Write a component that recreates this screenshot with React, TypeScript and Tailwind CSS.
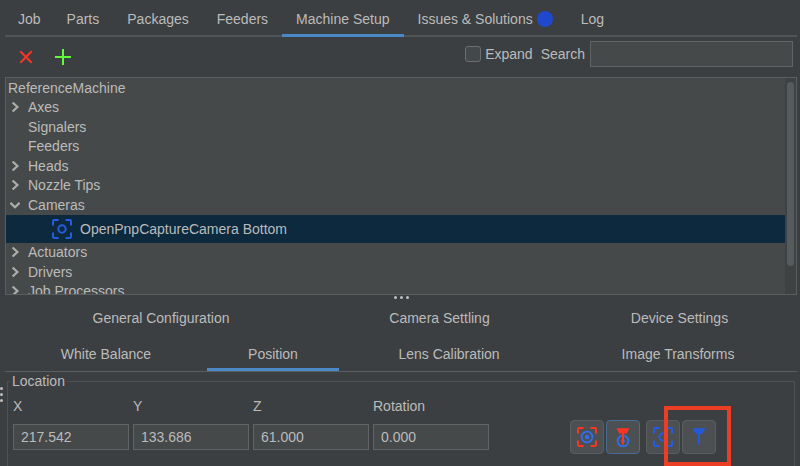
import type { ReactNode } from "react";
import clsx from "clsx";

type Branch = { name: string; state: "root" | "closed" | "open" | "leaf" | "camera" };

const tree: Branch[] = [
  { name: "ReferenceMachine", state: "root" },
  { name: "Axes", state: "closed" },
  { name: "Signalers", state: "leaf" },
  { name: "Feeders", state: "leaf" },
  { name: "Heads", state: "closed" },
  { name: "Nozzle Tips", state: "closed" },
  { name: "Cameras", state: "open" },
  { name: "OpenPnpCaptureCamera Bottom", state: "camera" },
  { name: "Actuators", state: "closed" },
  { name: "Drivers", state: "closed" },
  { name: "Job Processors", state: "closed" },
];

const mainTabs = ["Job", "Parts", "Packages", "Feeders", "Machine Setup", "Issues & Solutions", "Log"];

const fields = [
  { label: "X", value: "217.542" },
  { label: "Y", value: "133.686" },
  { label: "Z", value: "61.000" },
  { label: "Rotation", value: "0.000" },
];

function Brackets({ color }: { color: string }) {
  return (
    <path
      d="M1 6.5V2.2Q1 1 2.2 1H6.5M13.5 1H17.8Q19 1 19 2.2V6.5M19 13.5V17.8Q19 19 17.8 19H13.5M6.5 19H2.2Q1 19 1 17.8V13.5"
      fill="none"
      stroke={color}
      strokeWidth="2"
    />
  );
}

function CameraIcon() {
  return (
    <svg width="20" height="20" viewBox="0 0 20 20" aria-hidden="true">
      <Brackets color="#255ce2" />
      <circle cx="10" cy="10" r="3.7" fill="none" stroke="#255ce2" strokeWidth="2" />
    </svg>
  );
}

function CaptureCameraIcon() {
  return (
    <svg width="20" height="20" viewBox="0 0 20 20" aria-hidden="true">
      <Brackets color="#fb3424" />
      <circle cx="10" cy="10" r="5.4" fill="none" stroke="#2f6ff2" strokeWidth="1.7" />
      <circle cx="10" cy="10" r="2.2" fill="#2f6ff2" />
    </svg>
  );
}

function CaptureToolIcon() {
  return (
    <svg width="20" height="20" viewBox="0 0 20 20" aria-hidden="true">
      <circle cx="10" cy="14" r="5.4" fill="none" stroke="#2f6ff2" strokeWidth="1.7" />
      <circle cx="10" cy="14" r="2" fill="#2f6ff2" />
      <path d="M3.5 1.2H16.5L13.6 6.6H6.4Z" fill="#fb3424" />
      <path d="M10 6V17.5" stroke="#fb3424" strokeWidth="2" />
    </svg>
  );
}

function ToolIcon() {
  return (
    <svg width="20" height="20" viewBox="0 0 20 20" aria-hidden="true">
      <path d="M3.4 1.2H16.6L13.4 6.8H6.6Z" fill="#2459dc" />
      <path d="M10 6V17.4" stroke="#2459dc" strokeWidth="2" />
    </svg>
  );
}

function Chevron({ open }: { open: boolean }) {
  return (
    <svg width="10" height="10" viewBox="0 0 10 10" fill="none" stroke="#adadad" strokeWidth="2.2" aria-hidden="true">
      <path d={open ? "M0.4 2.8L5 7.2L9.6 2.8" : "M2.6 0.5L7.4 5L2.6 9.5"} />
    </svg>
  );
}

function Tab({ children, active, className }: { children: ReactNode; active?: boolean; className?: string }) {
  return (
    <button
      type="button"
      role="tab"
      aria-selected={!!active}
      className={clsx(
        "flex items-center justify-center gap-1 whitespace-nowrap border-b-3 pt-[3px]",
        active ? "border-[#4a88c7]" : "border-transparent",
        className,
      )}
    >
      {children}
    </button>
  );
}

function Dots({ vertical }: { vertical?: boolean }) {
  return (
    <span className={clsx("flex gap-[3px]", vertical && "flex-col")}>
      <i className="size-[3px] rounded-full bg-[#c0c0c0]" />
      <i className="size-[3px] rounded-full bg-[#c0c0c0]" />
      <i className="size-[3px] rounded-full bg-[#c0c0c0]" />
    </span>
  );
}

function IconButton({ label, active, children }: { label: string; active?: boolean; children: ReactNode }) {
  return (
    <button
      type="button"
      aria-label={label}
      className={clsx(
        "flex size-[34px] items-center justify-center rounded border bg-[#4c5052]",
        active ? "border-[#466d94]" : "border-[#5a5d5e]",
      )}
    >
      {children}
    </button>
  );
}

export default function App() {
  return (
    <div className="flex h-screen min-h-[466px] overflow-hidden bg-[#3c3f41] font-['Liberation_Sans',Arial,sans-serif] text-[14px] leading-[18px] text-[#bbbbbb]">
      <div className="flex w-[5px] shrink-0 flex-col pt-[387px]">
        <Dots vertical />
      </div>
      <main className="flex min-w-0 flex-1 flex-col pr-[3px]">
        <div role="tablist" className="flex h-[37px] shrink-0 bg-[linear-gradient(#515455,#515455)] bg-[length:100%_2px] bg-bottom bg-no-repeat">
          {mainTabs.map((name) => (
            <Tab key={name} active={name === "Machine Setup"} className="px-[14px] first:pl-[13px] first:pr-3">
              {name}
              {name === "Issues & Solutions" && <span className="size-4 rounded-full bg-[#1f48cd]" />}
            </Tab>
          ))}
        </div>

        <div className="flex h-10 shrink-0 items-center pl-[13px] pr-1">
          <button type="button" aria-label="Delete" className="flex size-4 items-center justify-center">
            <svg width="16" height="16" viewBox="0 0 16 16" stroke="#fb3424" strokeWidth="2">
              <path d="M2.3 2.3L13.7 13.7M13.7 2.3L2.3 13.7" />
            </svg>
          </button>
          <button type="button" aria-label="Add" className="ml-[21px] flex size-4 items-center justify-center">
            <svg width="16" height="16" viewBox="0 0 16 16" stroke="#62f83c" strokeWidth="2">
              <path d="M0 8H16M8 0V16" />
            </svg>
          </button>
          <div className="mb-[7px] ml-auto flex items-center">
            <label className="flex items-center gap-1">
              <input type="checkbox" className="size-4 appearance-none rounded-[3px] border border-[#6b6d6e] bg-[#43494a]" />
              Expand
            </label>
            <label htmlFor="search" className="ml-2">
              Search
            </label>
            <input id="search" type="text" className="ml-[5px] h-[26px] w-[203px] border border-[#616465] bg-[#45494a] px-2 outline-none" />
          </div>
        </div>

        <div className="flex h-[218px] shrink-0 overflow-hidden border border-[#5b5e5f] bg-[#464949]">
          <ul role="tree" className="grid h-[223px] flex-1 grid-rows-[repeat(7,1fr)_28px_repeat(3,1fr)]">
            {tree.map(({ name, state }) => (
              <li
                key={name}
                role="treeitem"
                aria-selected={state === "camera"}
                className={clsx(
                  "flex items-center",
                  state === "root" && "pl-[2px]",
                  state === "leaf" && "pl-[22px]",
                  (state === "closed" || state === "open") && "gap-2 pl-1",
                  state === "camera" && "gap-2 bg-[#0d293e] pl-[46px]",
                )}
              >
                {(state === "closed" || state === "open") && <Chevron open={state === "open"} />}
                {state === "camera" && <CameraIcon />}
                {name}
              </li>
            ))}
          </ul>
          <div className="w-[11px] bg-[#3e4243] px-[2px] pt-1">
            <div className="h-[184px] rounded-full bg-[#565b5e]" />
          </div>
        </div>

        <div className="flex h-[5px] shrink-0 items-center justify-center">
          <Dots />
        </div>

        <div role="tablist" className="shrink-0 border-b border-[#5b5e5f]">
          <div className="grid h-9 grid-cols-[312fr_245fr_235fr]">
            <Tab>General Configuration</Tab>
            <Tab>Camera Settling</Tab>
            <Tab>Device Settings</Tab>
          </div>
          <div className="grid h-[35px] grid-cols-[202fr_132fr_220fr_238fr]">
            <Tab>White Balance</Tab>
            <Tab active>Position</Tab>
            <Tab>Lens Calibration</Tab>
            <Tab>Image Transforms</Tab>
          </div>
        </div>

        <fieldset className="mx-[2px] min-w-0 flex-1 border border-b-0 border-[#4f5253] pl-[5px]">
          <legend className="-ml-[3px] px-[2px]">Location</legend>
          <div className="flex items-end gap-1 pt-[7px]">
            {fields.map(({ label, value }) => (
              <label key={label} className="grid gap-[5px]">
                {label}
                <span className="flex h-[34px] items-center">
                  <input
                    type="text"
                    defaultValue={value}
                    className="h-[26px] w-[116px] border border-[#616465] bg-[#45494a] px-[7px] outline-none"
                  />
                </span>
              </label>
            ))}
            <div className="ml-[77px] flex gap-[6px]">
              <div className="flex gap-[2px]">
                <IconButton label="Capture camera coordinates">
                  <CaptureCameraIcon />
                </IconButton>
                <IconButton label="Capture tool coordinates" active>
                  <CaptureToolIcon />
                </IconButton>
              </div>
              <div className="flex gap-[2px]">
                <IconButton label="Position camera">
                  <CameraIcon />
                </IconButton>
                <div className="relative">
                  <IconButton label="Position tool">
                    <ToolIcon />
                  </IconButton>
                  <div className="pointer-events-none absolute -left-[18px] -top-[14px] h-[60px] w-[67px] border-4 border-[#eb3e25]" />
                </div>
              </div>
            </div>
          </div>
        </fieldset>
      </main>
    </div>
  );
}
